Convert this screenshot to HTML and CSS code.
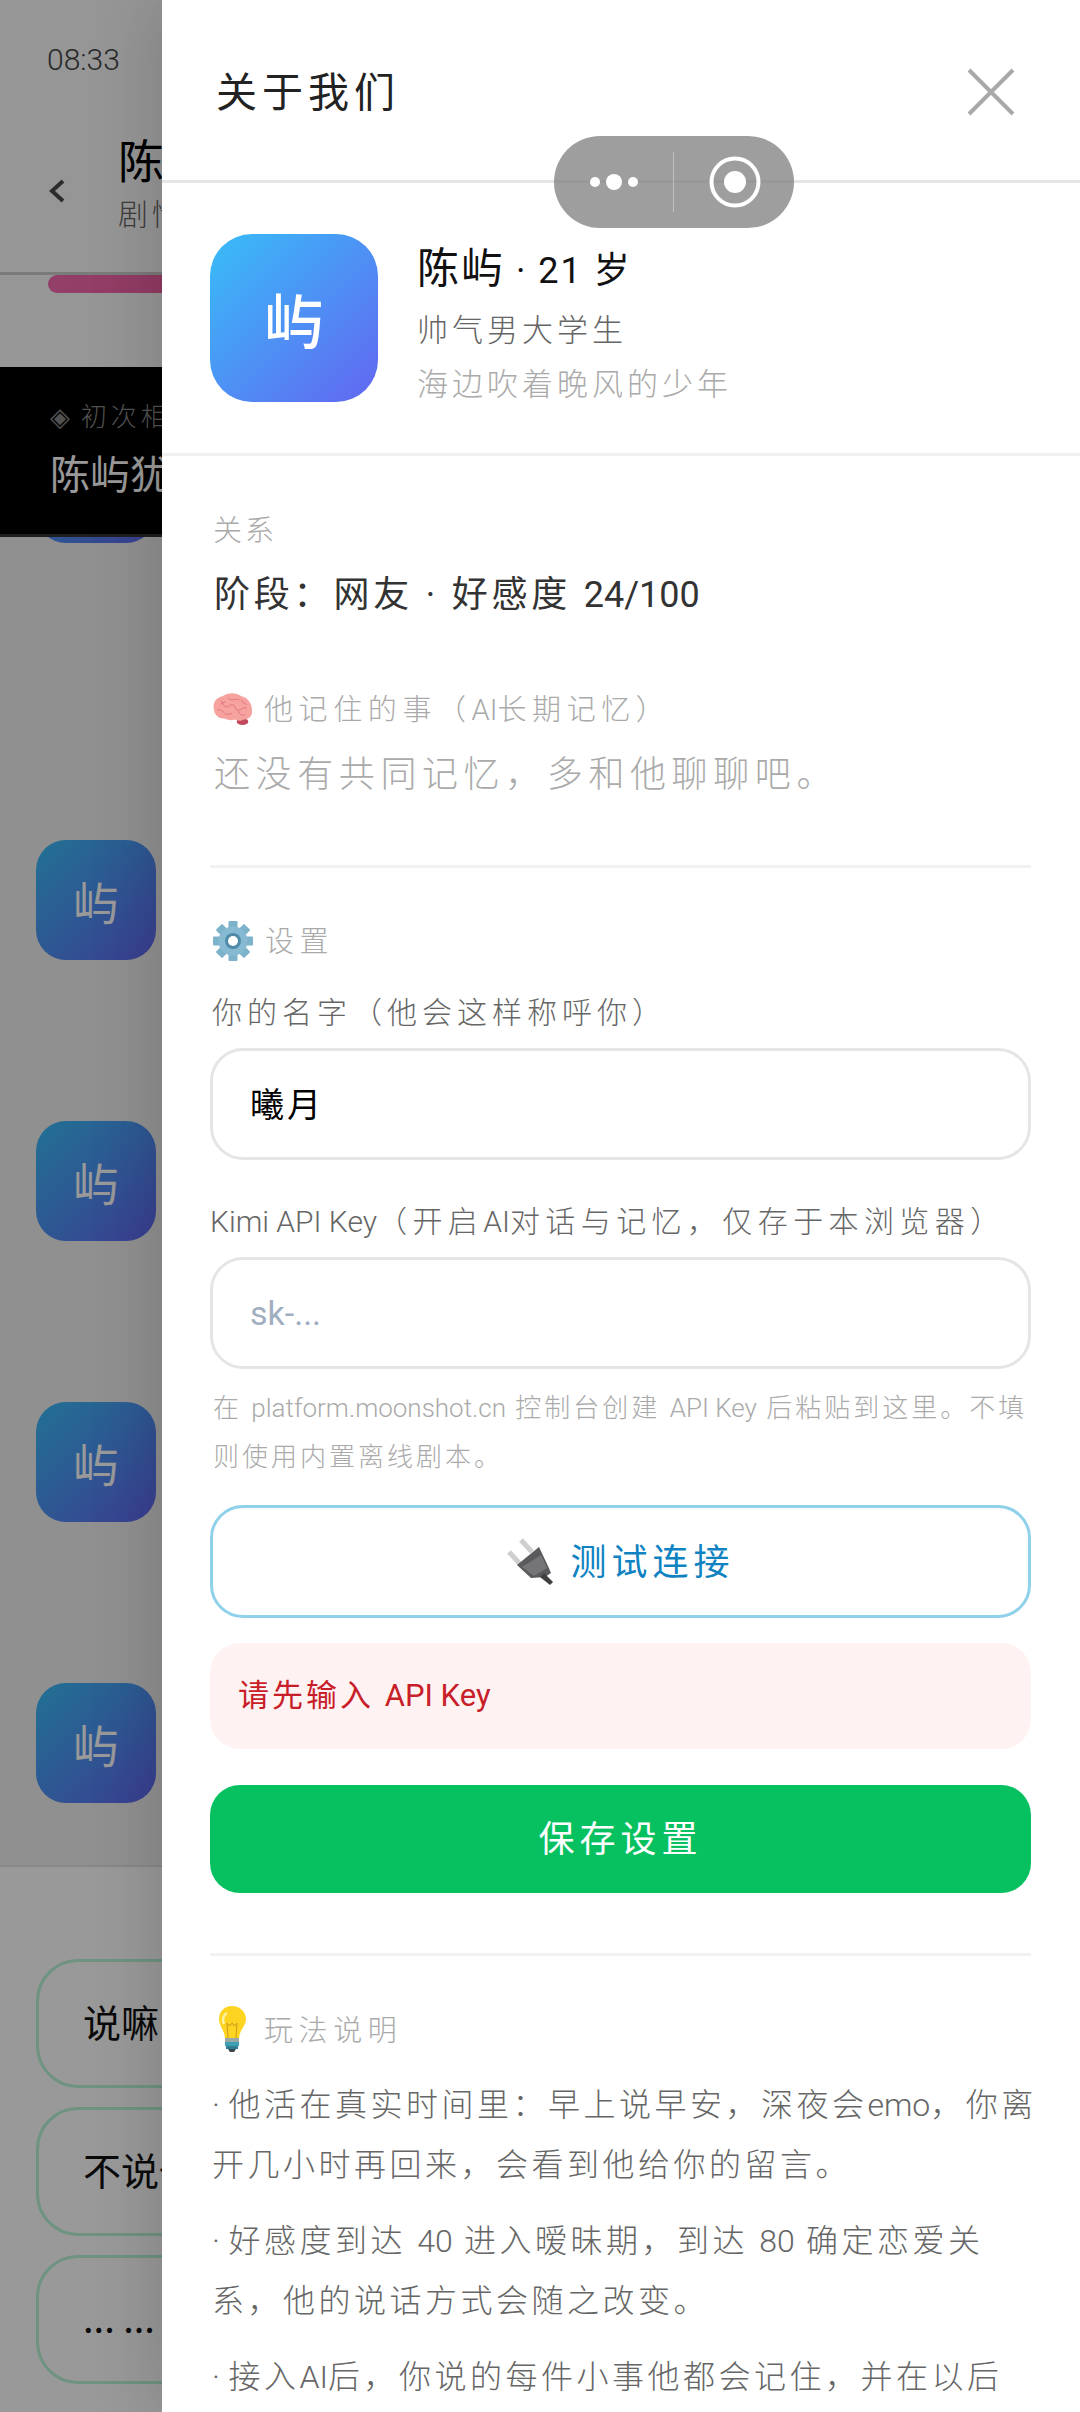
FILE: index.html
```html
<!DOCTYPE html>
<html lang="zh-CN">
<head>
<meta charset="utf-8">
<title>关于我们</title>
<link rel="stylesheet" href="styles.css">
</head>
<body>
<div class="app">
  <main class="page">
    <div class="status">08:33</div>
    <header class="nav">
      <svg class="back" width="18" height="26" viewBox="0 0 18 26"><path d="M15 3 4 13l11 10" fill="none" stroke="#4a4a4a" stroke-width="4"/></svg>
      <div class="nav-text">
        <div class="nav-name">陈屿</div>
        <div class="nav-sub">剧情模式</div>
      </div>
    </header>
    <div class="progress"><div class="progress-fill"></div></div>
    <section class="banner">
      <div class="banner-tag">◈ 初次相遇</div>
      <div class="banner-text">陈屿犹豫了一下</div>
    </section>
    <div class="chat">
      <div class="chat-ava chat-ava-first">屿</div>
      <div class="chat-ava">屿</div>
      <div class="chat-ava">屿</div>
      <div class="chat-ava">屿</div>
      <div class="chat-ava">屿</div>
    </div>
    <footer class="choices">
      <button class="chip">说嘛，我听着呢</button>
      <button class="chip">不说也没关系</button>
      <button class="chip">... ...</button>
    </footer>
  </main>
  <div class="scrim"></div>

  <aside class="drawer">
    <header class="drawer-head">
      <h1 class="drawer-title">关于我们</h1>
      <svg class="close" width="50" height="50" viewBox="0 0 50 50"><path d="M3 3 47 47M47 3 3 47" fill="none" stroke="#a9a9a9" stroke-width="4"/></svg>
    </header>
    <section class="profile">
      <div class="ava">屿</div>
      <div class="profile-text">
        <div class="name">陈屿<span class="name-tail"> · 21 岁</span></div>
        <div class="sub">帅气男大学生</div>
        <div class="tagline">海边吹着晚风的少年</div>
      </div>
    </section>
    <div class="body">
      <div class="sec-label sec-first"><span class="sec-text">关系</span></div>
      <div class="stage">阶段：网友 · 好感度 <span class="lat">24/100</span></div>
      <div class="sec-label sec-brain">
        <svg class="ico" width="39" height="34" viewBox="14 3 37 32">
          <ellipse cx="42" cy="31" rx="5.5" ry="3.2" fill="#c2485c"/>
          <path d="M15 20C13 14 17 8 23 7 28 3 36 3 41 7 47 8 51 14 51 20 52 26 47 29 43 29 40 31 37 30 35 29 30 31 27 28 24 28 19 28 15 24 15 20Z" fill="#f6a3a0"/>
          <path d="M21 11c3 2 2 5 5 6s4-3 7-2 1 5 5 5 4-3 8-2M18 20c3-1 5 1 7 3s5 1 7 0M28 8c1 2 4 3 6 2s3 1 5 0M41 10c0 3 3 3 5 5M38 21c1 3 3 4 6 4M26 12c-2 1-4 1-5 3" fill="none" stroke="#e0737a" stroke-width=".9"/>
        </svg>
        <span class="sec-text">他记住的事（<span class="lat">AI</span>长期记忆）</span>
      </div>
      <div class="memory">还没有共同记忆，多和他聊聊吧。</div>
      <hr class="rule rule-a">
      <div class="sec-label sec-gear">
        <svg class="ico" width="40" height="40" viewBox="13 5 40 40">
          <g fill="#7db2cb">
            <rect x="28.5" y="5" width="9" height="40" rx="1"/>
            <rect x="28.5" y="5" width="9" height="40" rx="1" transform="rotate(45 33 25)"/>
            <rect x="28.5" y="5" width="9" height="40" rx="1" transform="rotate(90 33 25)"/>
            <rect x="28.5" y="5" width="9" height="40" rx="1" transform="rotate(135 33 25)"/>
          </g>
          <circle cx="33" cy="25" r="14.5" fill="#86bad2"/>
          <circle cx="33" cy="25" r="8" fill="#4f8aa8"/>
          <circle cx="33" cy="25" r="5" fill="#fff"/>
        </svg>
        <span class="sec-text">设置</span>
      </div>
      <label class="field-label lab-name" for="who">你的名字（他会这样称呼你）</label>
      <input class="field field-name" id="who" type="text" value="曦月">
      <label class="field-label lab-key" for="key"><span class="lat">Kimi API Key</span>（开启<span class="lat">AI</span>对话与记忆，仅存于本浏览器）</label>
      <input class="field field-key" id="key" type="text" placeholder="sk-...">
      <p class="hint">在 <span class="lat">platform.moonshot.cn</span> 控制台创建 <span class="lat">API Key</span> 后粘贴到这里。不填则使用内置离线剧本。</p>
      <button class="btn-test">
        <svg width="50" height="50" viewBox="8 2 50 50">
          <path d="M11 17 22 29M23 5 34 17" stroke="#cfcfcf" stroke-width="5" fill="none"/>
          <path d="M19 30 41 12 50 31 53 38 47 42 33 43Z" fill="#5a5a5c"/>
          <path d="M24 32 43 20 49 33 36 41Z" fill="#757577"/>
          <path d="M46 38 55 47 52 50 42 42Z" fill="#3f3f41"/>
        </svg>
        <span class="btn-text">测试连接</span>
      </button>
      <div class="notice">请先输入 <span class="lat">API Key</span></div>
      <button class="btn-save"><span class="btn-text">保存设置</span></button>
      <hr class="rule rule-b">
      <div class="sec-label sec-bulb">
        <svg class="ico" width="39" height="48" viewBox="8 5 39 48">
          <path d="M27 5C19 5 14 11 14 18c0 7 5 10 6 19h14c1-9 7-12 7-19C41 11 35 5 27 5Z" fill="#fdd422"/>
          <path d="M22 12C18 14 17 19 19 23" fill="none" stroke="#fff3a8" stroke-width="2.5"/>
          <path d="M23 37 22 22l3 3 2-3 2 3 3-3-1 15" fill="none" stroke="#c89a1a" stroke-width="1"/>
          <rect x="20" y="37" width="14" height="4" fill="#9aa8a8"/>
          <rect x="20" y="41" width="14" height="4" fill="#3f9fb5"/>
          <rect x="21" y="45" width="12" height="3" fill="#2f7d92"/>
          <path d="M23 48h8l-2 3h-4Z" fill="#3a4750"/>
        </svg>
        <span class="sec-text">玩法说明</span>
      </div>
      <p class="para para-first"><span class="bul">·</span>他活在真实时间里：早上说早安，深夜会<span class="lat">emo</span>，你离开几小时再回来，会看到他给你的留言。</p>
      <p class="para"><span class="bul">·</span>好感度到达 <span class="lat">40</span> 进入暧昧期，到达 <span class="lat">80</span> 确定恋爱关系，他的说话方式会随之改变。</p>
      <p class="para"><span class="bul">·</span>接入<span class="lat">AI</span>后，你说的每件小事他都会记住，并在以后的对话里提起。</p>
    </div>
  </aside>

  <div class="capsule">
    <span class="cap-dots"><i class="dot"></i><i class="dot dot-big"></i><i class="dot"></i></span>
    <span class="cap-div"></span>
    <svg class="cap-target" width="52" height="52" viewBox="0 0 52 52"><circle cx="26" cy="26" r="23.5" fill="none" stroke="#fff" stroke-width="4"/><circle cx="26" cy="26" r="11" fill="#fff"/></svg>
  </div>
</div>
</body>
</html>
```
FILE: styles.css
```css
* { box-sizing: border-box; }
html, body { margin: 0; padding: 0; }
body { font-family: Roboto, "Noto Sans CJK SC", sans-serif; font-weight: 300; }
.lat { letter-spacing: 0; }

.app { position: relative; width: 1080px; height: 2412px; overflow: hidden; background: #fff; }

/* page behind the drawer */
.page { display: flex; flex-direction: column; width: 1080px; height: 2412px; background: #fbfbfb; }
.status { height: 120px; padding: 39px 0 0 47px; font: 300 30px/42px Roboto, sans-serif; color: #444; }
.nav { display: flex; align-items: center; height: 155px; border-bottom: 3px solid #ccc; padding-left: 48px; }
.back { margin-right: 52px; margin-top: -10px; }
.nav-text { display: flex; flex-direction: column; margin-top: -32px; }
.nav-name { font: 400 46px/64px "Noto Sans CJK SC", sans-serif; color: #000; }
.nav-sub { font: 300 30px/44px "Noto Sans CJK SC", sans-serif; color: #666; letter-spacing: 4px; }
.progress { height: 92px; padding-left: 48px; }
.progress-fill { height: 18px; width: 500px; border-radius: 9px; background: linear-gradient(90deg, #f56bb0, #e8457a); }
.banner { position: relative; z-index: 1; height: 170px; background: #000; border-bottom: 3px solid #333; padding: 30px 0 0 50px; }
.banner-tag { font: 300 26px/36px "Noto Sans CJK SC", sans-serif; color: #888; letter-spacing: 4px; word-spacing: -3px; white-space: nowrap; }
.banner-text { margin-top: 11px; font: 400 40px/56px "Noto Sans CJK SC", sans-serif; color: #fff; white-space: nowrap; }
.chat { flex: 0 0 1328px; display: flex; flex-direction: column; gap: 161px; padding-left: 36px; background: #f0f0f0; }
.chat-ava { display: flex; align-items: center; justify-content: center; flex: 0 0 120px; width: 120px; border-radius: 30px; color: #fff; font: 400 46px/1 "Noto Sans CJK SC", sans-serif; background: linear-gradient(135deg, #38bdf8, #6366f1); }
.chat-ava-first { margin-top: -114px; margin-bottom: 136px; }
.choices { flex: 1; display: flex; flex-direction: column; gap: 19px; padding: 92px 0 0 36px; background: #fff; border-top: 2px solid #e2e2e2; }
.chip { flex: 0 0 129px; width: 1000px; padding: 0 0 6px 44px; text-align: left; background: #fff; border: 3px solid #b8f5d8; border-radius: 42px; font: 400 38px/1 "Noto Sans CJK SC", sans-serif; color: #111; }
.scrim { position: absolute; inset: 0; z-index: 2; background: rgba(0, 0, 0, .4); }

/* drawer */
.drawer { position: absolute; top: 0; right: 0; z-index: 3; width: 918px; height: 2412px; overflow: hidden; background: #fff; box-shadow: -10px 0 60px rgba(0, 0, 0, .14); }
.drawer-head { display: flex; align-items: center; justify-content: space-between; height: 183px; padding: 0 64px 0 54px; border-bottom: 3px solid #e5e5e5; }
.drawer-title { margin: 0 0 3px; font: 400 41px/60px "Noto Sans CJK SC", sans-serif; letter-spacing: 5px; color: #222; }
.close { display: block; margin-top: 3px; }
.profile { display: flex; align-items: flex-start; gap: 39px; height: 273px; padding: 51px 48px 0; border-bottom: 3px solid #f1f1f1; }
.ava { flex: 0 0 168px; height: 168px; display: flex; align-items: center; justify-content: center; border-radius: 42px; color: #fff; font: 500 60px/1 "Noto Sans CJK SC", sans-serif; background: linear-gradient(135deg, #38bdf8, #6366f1); }
.profile-text { margin-top: 5px; }
.name { font-size: 42px; font-weight: 400; line-height: 60px; letter-spacing: 2px; color: #111; white-space: nowrap; }
.name-tail { font-size: 36px; }
.sub { font-size: 31px; line-height: 60px; letter-spacing: 4px; color: #666; }
.tagline { font-size: 31px; line-height: 48px; letter-spacing: 4px; color: #aaa; }

.body { padding: 0 49px 0 48px; }
.sec-label { display: flex; align-items: center; gap: 12px; height: 48px; font-size: 29px; letter-spacing: 5.6px; color: #aaa; white-space: nowrap; }
.sec-text { margin-bottom: 5px; }
.sec-first { margin-top: 50px; padding-left: 3px; letter-spacing: 3px; }
.ico { flex: none; margin-left: 3px; }
.stage { margin-top: 16px; height: 50px; padding-left: 4px; font-size: 36px; line-height: 50px; letter-spacing: 3.8px; color: #333; font-weight: 400; white-space: nowrap; }
.sec-brain { margin-top: 65px; }
.memory { margin-top: 16px; height: 52px; padding-left: 4px; font-size: 36px; line-height: 52px; letter-spacing: 5.6px; color: #aaa; white-space: nowrap; }
.rule { border: 0; height: 3px; margin: 0; background: #f1f1f1; }
.rule-a { margin-top: 64px; }
.rule-b { margin-top: 60px; }
.sec-gear { margin-top: 49px; }
.field-label { display: block; height: 44px; font-size: 30px; line-height: 44px; letter-spacing: 5.4px; color: #666; white-space: nowrap; }
.lab-name { margin-top: 26px; padding-left: 2px; letter-spacing: 5px; }
.lab-key { margin-top: 40px; }
.field { display: block; width: 100%; height: 112px; padding: 0 37px; background: #fff; border: 3px solid #e5e5e5; border-radius: 33px; outline: 0; font: 400 34px/1 Roboto, "Noto Sans CJK SC", sans-serif; color: #000; }
.field::placeholder { color: #a0aec0; opacity: 1; }
.field-name { margin-top: 13px; padding-bottom: 4px; letter-spacing: 3px; }
.field-key { margin-top: 13px; }
.hint { margin: 15px 0 0; padding-left: 3px; font-size: 26px; line-height: 49px; letter-spacing: 3px; color: #aaa; }
.btn-test { display: flex; align-items: center; justify-content: center; gap: 14px; width: 100%; height: 113px; margin-top: 23px; padding: 0; background: #fff; border: 3px solid #8fd0ea; border-radius: 33px; font: 400 36px/1 "Noto Sans CJK SC", sans-serif; letter-spacing: 5px; color: #0f83c2; }
.btn-text { display: block; margin-bottom: 6px; }
.notice { display: block; height: 106px; margin-top: 25px; padding-left: 28px; border-radius: 30px; background: #fef2f2; font-size: 31px; line-height: 106px; letter-spacing: 3px; color: #c81e2a; font-weight: 400; }
.btn-save { display: block; width: 100%; height: 108px; margin-top: 36px; padding: 0; border: 0; border-radius: 30px; background: #07c160; color: #fff; font: 400 36px/1 "Noto Sans CJK SC", sans-serif; letter-spacing: 5px; }
.sec-bulb { margin-top: 50px; }
.para { margin: 17px 0 0; padding-left: 2px; font-size: 32px; line-height: 59.5px; letter-spacing: 3.5px; color: #666; }
.para-first { margin: 22px -12px 0 0; }
.bul { margin-right: 5px; }

/* mini-program capsule */
.capsule { position: absolute; top: 136px; left: 554px; z-index: 4; display: flex; align-items: center; width: 240px; height: 92px; border-radius: 46px; background: rgba(128, 128, 128, .76); }
.cap-dots { display: flex; align-items: center; justify-content: center; flex: 0 0 119px; gap: 6px; }
.dot { width: 10px; height: 10px; border-radius: 50%; background: #fff; }
.dot-big { width: 16px; height: 16px; }
.cap-div { width: 1px; height: 60px; background: rgba(255, 255, 255, .35); }
.cap-target { margin-left: 35px; }
```
